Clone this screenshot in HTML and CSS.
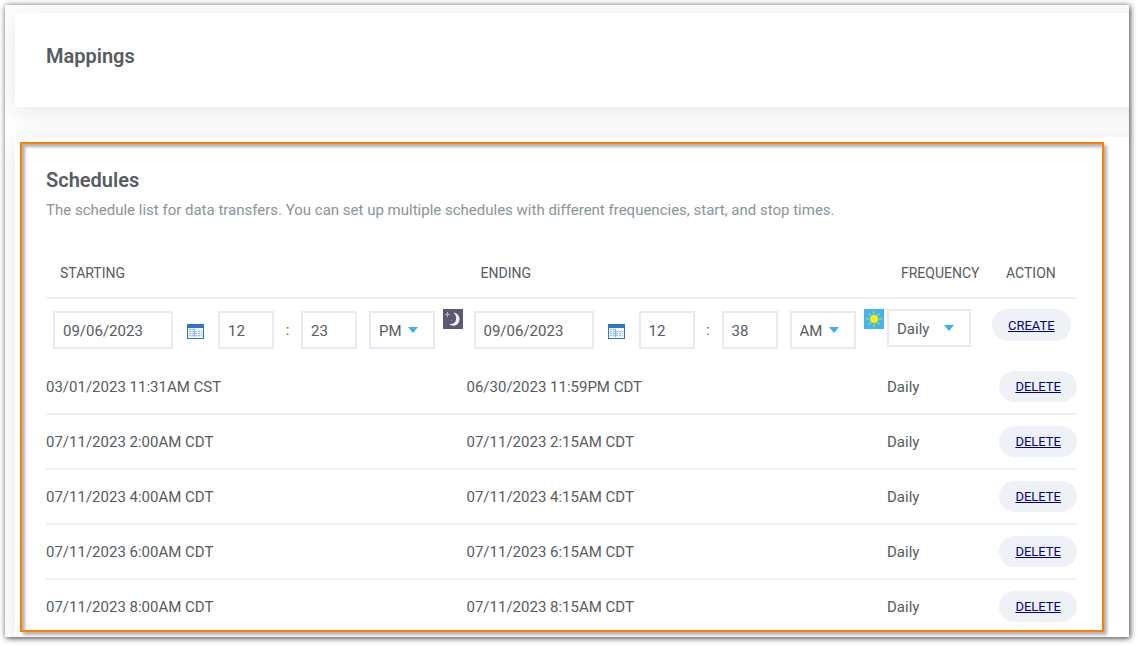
FILE: index.html
```html
<!DOCTYPE html>
<html lang="en">
  <head>
    <meta charset="utf-8">
    <title>Schedules</title>
    <link rel="stylesheet" href="styles.css">
  </head>
  <body>
    <!-- shared icons -->
    <svg class="sprite" aria-hidden="true">
      <symbol id="icon-calendar" viewBox="0 0 17 15">
        <rect width="17" height="15" fill="#2f76c0" />
        <rect x="1" y="4" width="15" height="10" fill="#e6f1fa" />
        <path d="M2 5.500h5M2 7.500h13M2 9.500h13M2 11.500h13" stroke="#9cc0e2" stroke-dasharray="2 1" />
        <path d="M7.500 5v8" stroke="#8fb6dc" />
        <path d="M8 4h8v2H8zM1 13h15v1H1z" fill="#fff" />
      </symbol>
      <symbol id="icon-moon" viewBox="0 0 20 20">
        <rect width="20" height="20" fill="#5f5872" />
        <path d="M10.500 3.500c6 .8 7.500 7.200 4.500 11-2.300 2.900-6.500 2.800-9 .2 3.600 1 6.500-.7 7-4.200.4-2.800-.5-5.200-2.500-7z" fill="#f4f2f6" />
        <path d="M4.500 3v5M2 5.500h5" stroke="#b8b3c4" />
        <path d="M8 11.500h1" stroke="#a49eb2" />
      </symbol>
      <symbol id="icon-sun" viewBox="0 0 20 20">
        <rect width="20" height="20" fill="#44b5ee" />
        <path d="M10 2v16M2 10h16M4.500 4.500l11 11M15.500 4.500l-11 11" stroke="#a8d66c" stroke-width="1.500" />
        <circle cx="10" cy="10" r="5" fill="#44b5ee" />
        <circle cx="10" cy="10" r="4" fill="#fff200" />
      </symbol>
    </svg>

    <main class="page">
      <section class="panel mappings">
        <h2>Mappings</h2>
      </section>

      <section class="panel">
        <div class="highlight">
          <h2>Schedules</h2>
          <p class="description">The schedule list for data transfers. You can set up multiple schedules with different frequencies, start, and stop times.</p>

          <table class="schedules">
            <colgroup>
              <col>
              <col>
              <col class="col-frequency">
              <col class="col-action">
            </colgroup>
            <thead>
              <tr>
                <th>STARTING</th>
                <th>ENDING</th>
                <th>FREQUENCY</th>
                <th>ACTION</th>
              </tr>
            </thead>
            <tbody>
              <tr class="new-schedule">
                <td>
                  <div class="picker">
                    <input class="field date" type="text" value="09/06/2023" aria-label="Start date">
                    <button class="calendar" type="button" aria-label="Choose start date"><svg width="17" height="15"><use href="#icon-calendar" /></svg></button>
                    <input class="field time" type="text" value="12" aria-label="Start hour">
                    <span class="colon">:</span>
                    <input class="field time" type="text" value="23" aria-label="Start minute">
                    <select class="field meridiem" aria-label="Start AM or PM">
                      <option>AM</option>
                      <option selected>PM</option>
                    </select>
                    <svg class="daypart" width="20" height="20"><use href="#icon-moon" /></svg>
                  </div>
                </td>
                <td>
                  <div class="picker">
                    <input class="field date" type="text" value="09/06/2023" aria-label="End date">
                    <button class="calendar" type="button" aria-label="Choose end date"><svg width="17" height="15"><use href="#icon-calendar" /></svg></button>
                    <input class="field time" type="text" value="12" aria-label="End hour">
                    <span class="colon">:</span>
                    <input class="field time" type="text" value="38" aria-label="End minute">
                    <select class="field meridiem" aria-label="End AM or PM">
                      <option selected>AM</option>
                      <option>PM</option>
                    </select>
                    <svg class="daypart" width="20" height="20"><use href="#icon-sun" /></svg>
                  </div>
                </td>
                <td>
                  <select class="field frequency" aria-label="Frequency">
                    <option>Daily</option>
                    <option>Weekly</option>
                    <option>Monthly</option>
                  </select>
                </td>
                <td class="action"><button class="pill" type="button">CREATE</button></td>
              </tr>
              <tr>
                <td>03/01/2023 11:31AM CST</td>
                <td>06/30/2023 11:59PM CDT</td>
                <td>Daily</td>
                <td class="action"><button class="pill" type="button">DELETE</button></td>
              </tr>
              <tr>
                <td>07/11/2023 2:00AM CDT</td>
                <td>07/11/2023 2:15AM CDT</td>
                <td>Daily</td>
                <td class="action"><button class="pill" type="button">DELETE</button></td>
              </tr>
              <tr>
                <td>07/11/2023 4:00AM CDT</td>
                <td>07/11/2023 4:15AM CDT</td>
                <td>Daily</td>
                <td class="action"><button class="pill" type="button">DELETE</button></td>
              </tr>
              <tr>
                <td>07/11/2023 6:00AM CDT</td>
                <td>07/11/2023 6:15AM CDT</td>
                <td>Daily</td>
                <td class="action"><button class="pill" type="button">DELETE</button></td>
              </tr>
              <tr>
                <td>07/11/2023 8:00AM CDT</td>
                <td>07/11/2023 8:15AM CDT</td>
                <td>Daily</td>
                <td class="action"><button class="pill" type="button">DELETE</button></td>
              </tr>
            </tbody>
          </table>
        </div>
      </section>
    </main>
  </body>
</html>
```
FILE: styles.css
```css
* {
  box-sizing: border-box;
}

body {
  margin: 0;
  padding: 5px 9px 9px 5px;
  background-color: #fff;
  color: #565c5f;
  font-family: Roboto, sans-serif;
  font-size: 15px;
  line-height: 20px;
}

.sprite {
  display: none;
}

.page {
  display: flex;
  flex-direction: column;
  gap: 30px;
  padding: 8px 0 0 10px;
  overflow: hidden;
  box-shadow: 1px 1px 6px rgba(0, 0, 0, 0.8);
}

/* panels run on past the right edge of the page */
.panel {
  margin-right: -30px;
  padding: 5px 55px 5px 5px;
  background-color: #fff;
  box-shadow: 0 5px 25px rgba(0, 0, 0, 0.1);
}

.mappings {
  padding: 30px 31px 38px;
}

h2 {
  margin: 0;
  font-size: 20px;
  font-weight: 600;
  line-height: 26px;
}

.highlight {
  padding: 23px 25px 0 24px;
  border: 2px solid #ff8000;
  box-shadow: 3px 3px 3px rgba(0, 0, 0, 0.3), inset 3px 3px 3px rgba(0, 0, 0, 0.3);
}

.description {
  margin: 7px 0 29px;
  color: #8a9499;
}

.schedules {
  width: 100%;
  border-collapse: separate;
  border-spacing: 0;
  table-layout: fixed;
}

.col-frequency {
  width: 105px;
}

.col-action {
  width: 85px;
}

th {
  padding: 14px;
  border-bottom: 2px solid #eef2f7;
  font-size: 14px;
  font-weight: 400;
  text-align: left;
}

td {
  padding: 11px 0;
  border-bottom: 2px solid #eef2f7;
  white-space: nowrap;
}

td.action {
  text-align: right;
}

tr:last-child td {
  padding-bottom: 8px;
  border-bottom: 0;
}

.new-schedule td {
  padding: 10px 0 11px;
  border-bottom: 0;
  vertical-align: top;
}

.new-schedule td.action {
  text-align: left;
}

.picker {
  display: flex;
  align-items: center;
  padding: 2px 0 0 7px;
}

.field {
  height: 38px;
  padding: 1px 8px 0;
  border: 2px solid #e8ebf3;
  border-radius: 0;
  background-color: #fff;
  color: inherit;
  font: inherit;
}

.date {
  width: 120px;
}

.time {
  width: 56px;
}

.colon {
  width: 27px;
  text-align: center;
}

select.field {
  appearance: none;
  background-image: url("data:image/svg+xml,%3Csvg xmlns='http://www.w3.org/2000/svg' width='10' height='6'%3E%3Cpath d='M0 0h10L5 6z' fill='%233cb0f0'/%3E%3C/svg%3E");
  background-repeat: no-repeat;
  background-position: right 15px center;
}

.meridiem {
  width: 66px;
  margin-left: 12px;
}

.frequency {
  display: block;
  width: 84px;
}

.calendar {
  display: flex;
  margin: 2px 14px 0;
  padding: 0;
  border: 0;
  background: none;
}

.daypart {
  flex: none;
  align-self: flex-start;
  margin: -2px 0 0 8px;
}

.pill {
  display: block;
  height: 31px;
  margin-left: auto;
  padding: 0 16px;
  border: 0;
  border-radius: 16px;
  background-color: #eef2f7;
  color: #000080;
  font-family: inherit;
  font-size: 13px;
  text-decoration: underline;
}

.new-schedule .pill {
  height: 32px;
  margin-left: 0;
}
```
